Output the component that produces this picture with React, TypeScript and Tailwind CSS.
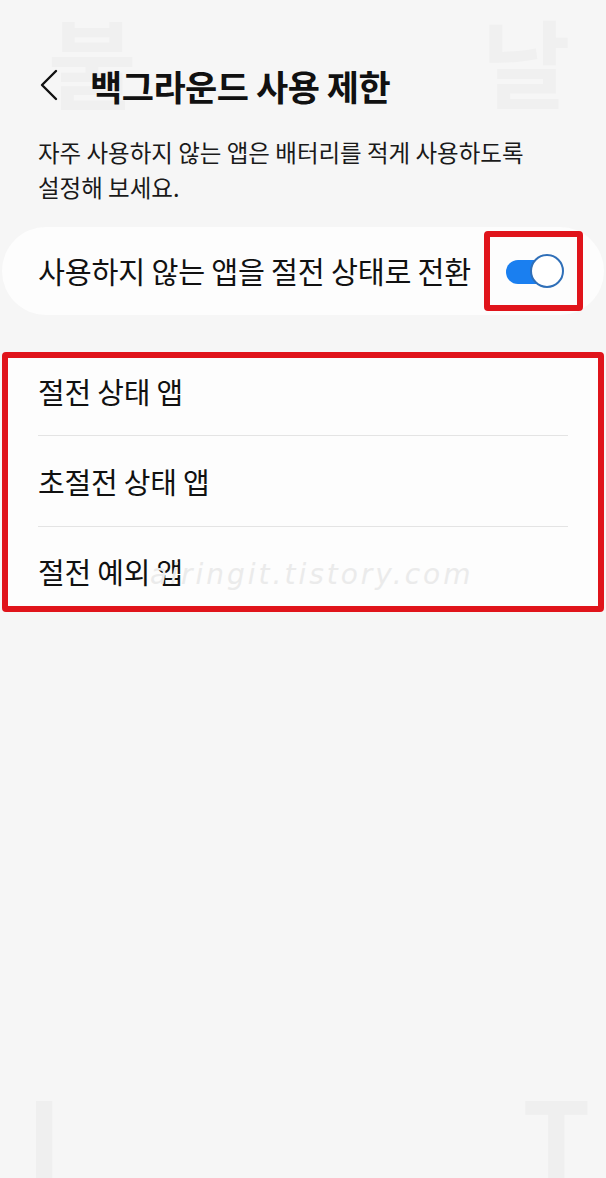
import React from "react";

const font = { fontFamily: '"Noto Sans CJK KR", "Noto Sans", sans-serif' };

function Toggle() {
  return (
    <div className="relative w-[60px] h-[34px]">
      <div className="absolute left-[2px] top-[6px] w-[50px] h-[24px] rounded-full bg-[#1a7ff0]" />
      <div className="absolute right-0 top-0 w-[34px] h-[34px] rounded-full bg-white border-2 border-[#2f6fb8]" />
    </div>
  );
}

const rows = [
  { label: "절전 상태 앱", cls: "h-[77px] pb-[11px]" },
  { label: "초절전 상태 앱", cls: "h-[90px]" },
  { label: "절전 예외 앱", cls: "h-[79px] pt-[9px]" },
];

export default function App() {
  return (
    <div
      className="relative w-[606px] h-[1178px] overflow-hidden bg-[#f6f6f6] text-[#111]"
      style={font}
    >
      {/* faint watermark letters */}
      <div className="absolute left-[48px] top-[12px] text-[96px] font-bold leading-none text-[#f0f0f0] select-none">
        불
      </div>
      <div className="absolute left-[482px] top-[12px] text-[96px] font-bold leading-none text-[#f0f0f0] select-none">
        날
      </div>
      <div className="absolute left-[26px] top-[1080px] text-[110px] font-bold leading-none text-[#efefef] select-none">
        I
      </div>
      <div className="absolute left-[522px] top-[1080px] text-[110px] font-bold leading-none text-[#efefef] select-none">
        T
      </div>

      {/* Header */}
      <div className="relative flex items-center h-[60px] mt-[55px] pl-[38px]">
        <svg width="22" height="34" viewBox="0 0 22 34" className="mr-[30px]">
          <path d="M18 3 L4 17 L18 31" fill="none" stroke="#111" strokeWidth="2.4" strokeLinecap="round" strokeLinejoin="round" />
        </svg>
        <h1 className="text-[35px] font-bold tracking-[-0.5px] leading-none">백그라운드 사용 제한</h1>
      </div>

      {/* Description */}
      <p className="relative mt-[20px] px-[38px] text-[23.5px] leading-[35px] text-[#1a1a1a]">
        자주 사용하지 않는 앱은 배터리를 적게 사용하도록
        <br />
        설정해 보세요.
      </p>

      {/* Toggle card */}
      <div className="relative mt-[22px] mx-[2px] h-[88px] rounded-[44px] bg-[#fdfdfd] flex items-center justify-between pl-[36px] pr-[21px]">
        <span className="text-[29.3px] tracking-[-0.2px] leading-none">사용하지 않는 앱을 절전 상태로 전환</span>
        <div className="w-[99px] h-[80px] border-[6px] border-[#e0141b] rounded-[4px] flex items-center justify-center">
          <Toggle />
        </div>
      </div>

      {/* List card */}
      <div className="relative mt-[37px] mx-[2px] border-[6px] border-[#e0141b] rounded-[4px] bg-[#fdfdfd] px-[30px]">
        {rows.map((r, i) => (
          <div key={r.label}>
            {i > 0 && <div className="h-px bg-[#e4e4e4]" />}
            <div className={`flex items-center ${r.cls}`}>
              <span className="text-[29px] tracking-[-0.2px] leading-none">{r.label}</span>
            </div>
          </div>
        ))}
        <div
          className="absolute left-[142px] top-[196px] text-[28px] italic font-light tracking-[3px] text-[#ebebeb] select-none"
          style={{ fontFamily: '"DejaVu Sans", sans-serif' }}
        >
          airingit.tistory.com
        </div>
      </div>
    </div>
  );
}
